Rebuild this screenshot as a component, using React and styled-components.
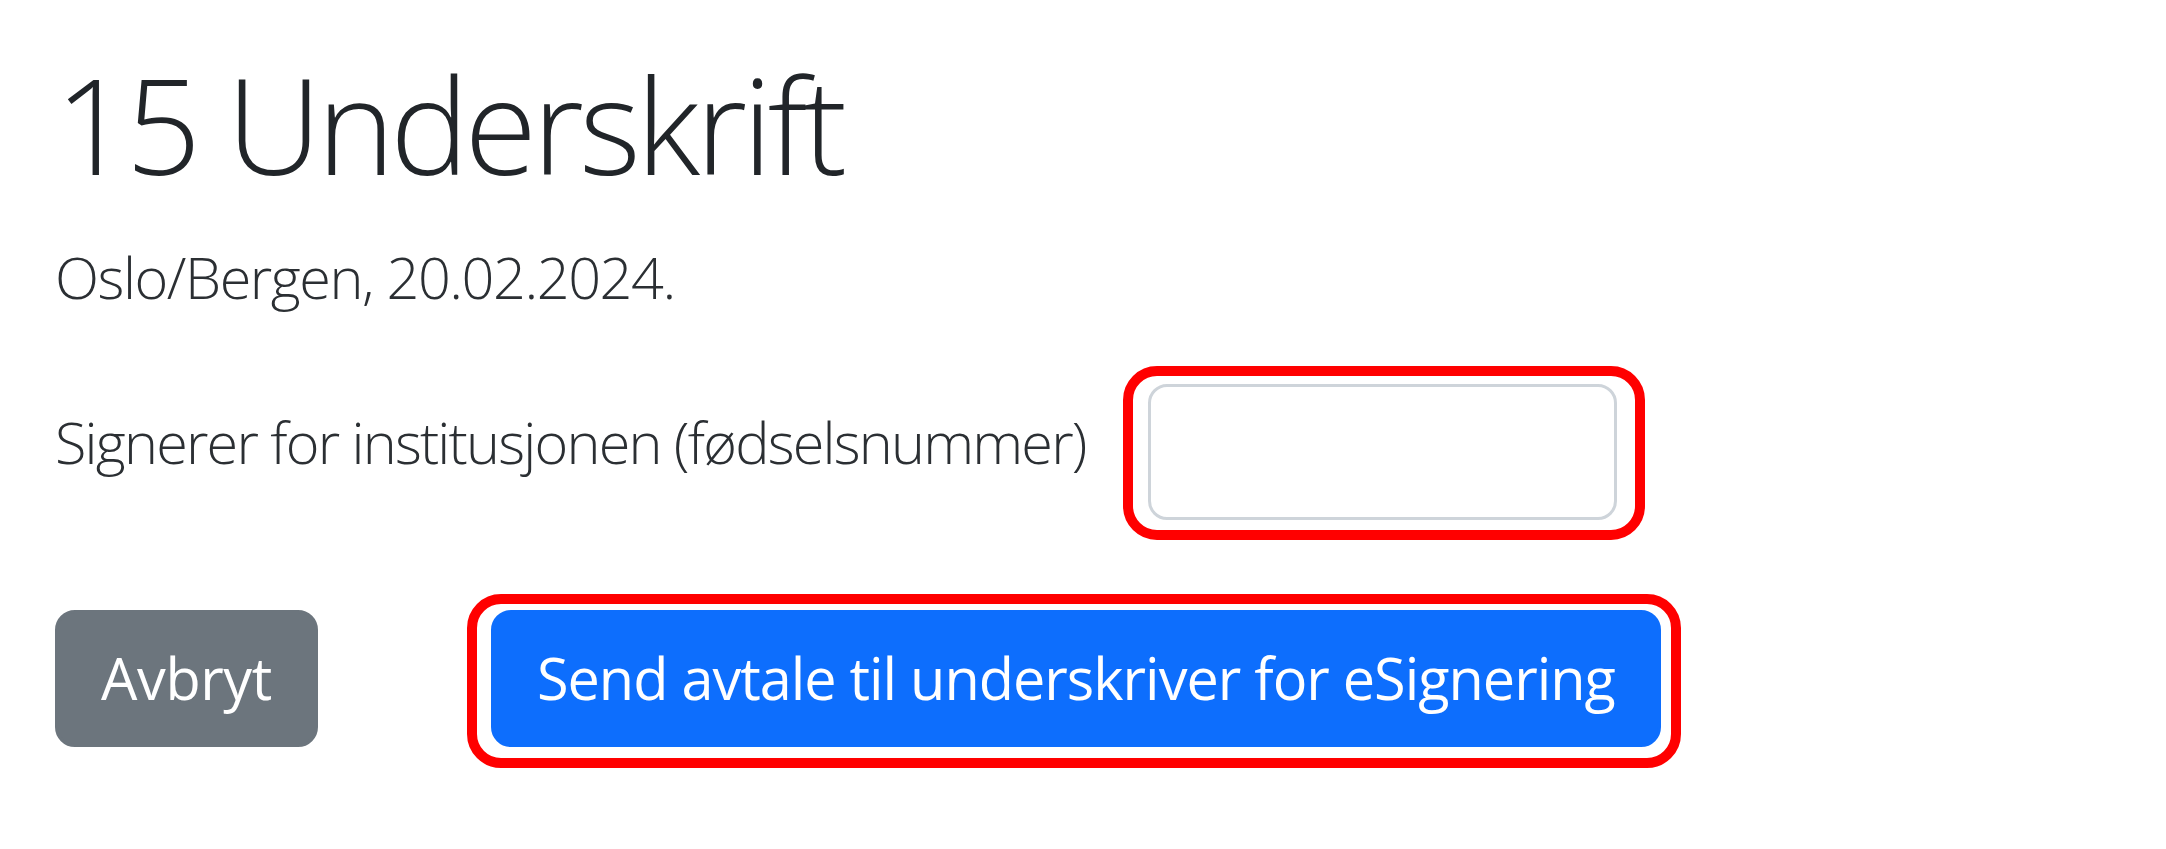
import React from 'react';
import styled, { createGlobalStyle } from 'styled-components';

const GlobalStyle = createGlobalStyle`
  html, body {
    margin: 0;
    padding: 0;
    background: #ffffff;
  }
  body {
    font-family: "Open Sans", "Noto Sans", "Liberation Sans", sans-serif;
    color: #212529;
  }
`;

const Page = styled.main`
  min-height: 100vh;
  box-sizing: border-box;
  padding: 45px 0 40px 55px;
`;

const Title = styled.h1`
  margin: 0 0 31px;
  font-size: 132px;
  font-weight: 300;
  line-height: 1.2;
  letter-spacing: -4.5px;
  color: #212529;
`;

const Place = styled.p`
  margin: 0 0 63px;
  font-size: 57.6px;
  font-weight: 300;
  line-height: 1.5;
  letter-spacing: -1.45px;
  color: #2b2f33;
`;

const FieldRow = styled.div`
  display: flex;
  align-items: flex-start;
  gap: 62px;
  margin-bottom: 90px;
`;

const Label = styled.label`
  padding-top: 15px;
  font-size: 57.6px;
  font-weight: 300;
  line-height: 1.5;
  letter-spacing: -1.8px;
  color: #2b2f33;
  white-space: nowrap;
`;

// red annotation drawn over a control
const Marked = styled.div`
  position: relative;
  display: inline-flex;

  &::after {
    content: '';
    position: absolute;
    top: ${({ $t }) => -$t}px;
    right: ${({ $r }) => -$r}px;
    bottom: ${({ $b }) => -$b}px;
    left: ${({ $l }) => -$l}px;
    border: 10px solid #ff0000;
    border-radius: 34px;
    pointer-events: none;
  }
`;

const Input = styled.input`
  box-sizing: border-box;
  width: 469px;
  height: 136px;
  padding: 21px 43px;
  font-family: inherit;
  font-size: 57.6px;
  border: 3.4px solid #ced4da;
  border-radius: 19px;
  background: #fff;
  outline: none;
`;

const Actions = styled.div`
  display: flex;
  align-items: center;
  gap: 173px;
`;

const Button = styled.button`
  box-sizing: border-box;
  height: 137px;
  padding: 0 43px;
  font-family: inherit;
  font-size: 57.6px;
  font-weight: 400;
  line-height: 1.5;
  letter-spacing: ${({ $variant }) => ($variant === 'primary' ? '-1px' : '-0.4px')};
  color: #ffffff;
  background: ${({ $variant }) => ($variant === 'primary' ? '#0d6efd' : '#6c757d')};
  border: 3.6px solid ${({ $variant }) => ($variant === 'primary' ? '#0d6efd' : '#6c757d')};
  border-radius: 20px;
  white-space: nowrap;
  cursor: pointer;
`;

export default function App() {
  return (
    <>
      <GlobalStyle />
      <Page>
        <Title>15 Underskrift</Title>
        <Place>Oslo/Bergen, 20.02.2024.</Place>
        <FieldRow>
          <Label htmlFor="fnr">Signerer for institusjonen (fødselsnummer)</Label>
          <Marked $t={18} $r={28} $b={20} $l={25}>
            <Input id="fnr" type="text" />
          </Marked>
        </FieldRow>
        <Actions>
          <Button $variant="secondary">Avbryt</Button>
          <Marked $t={16} $r={20} $b={21} $l={24}>
            <Button $variant="primary">Send avtale til underskriver for eSignering</Button>
          </Marked>
        </Actions>
      </Page>
    </>
  );
}
